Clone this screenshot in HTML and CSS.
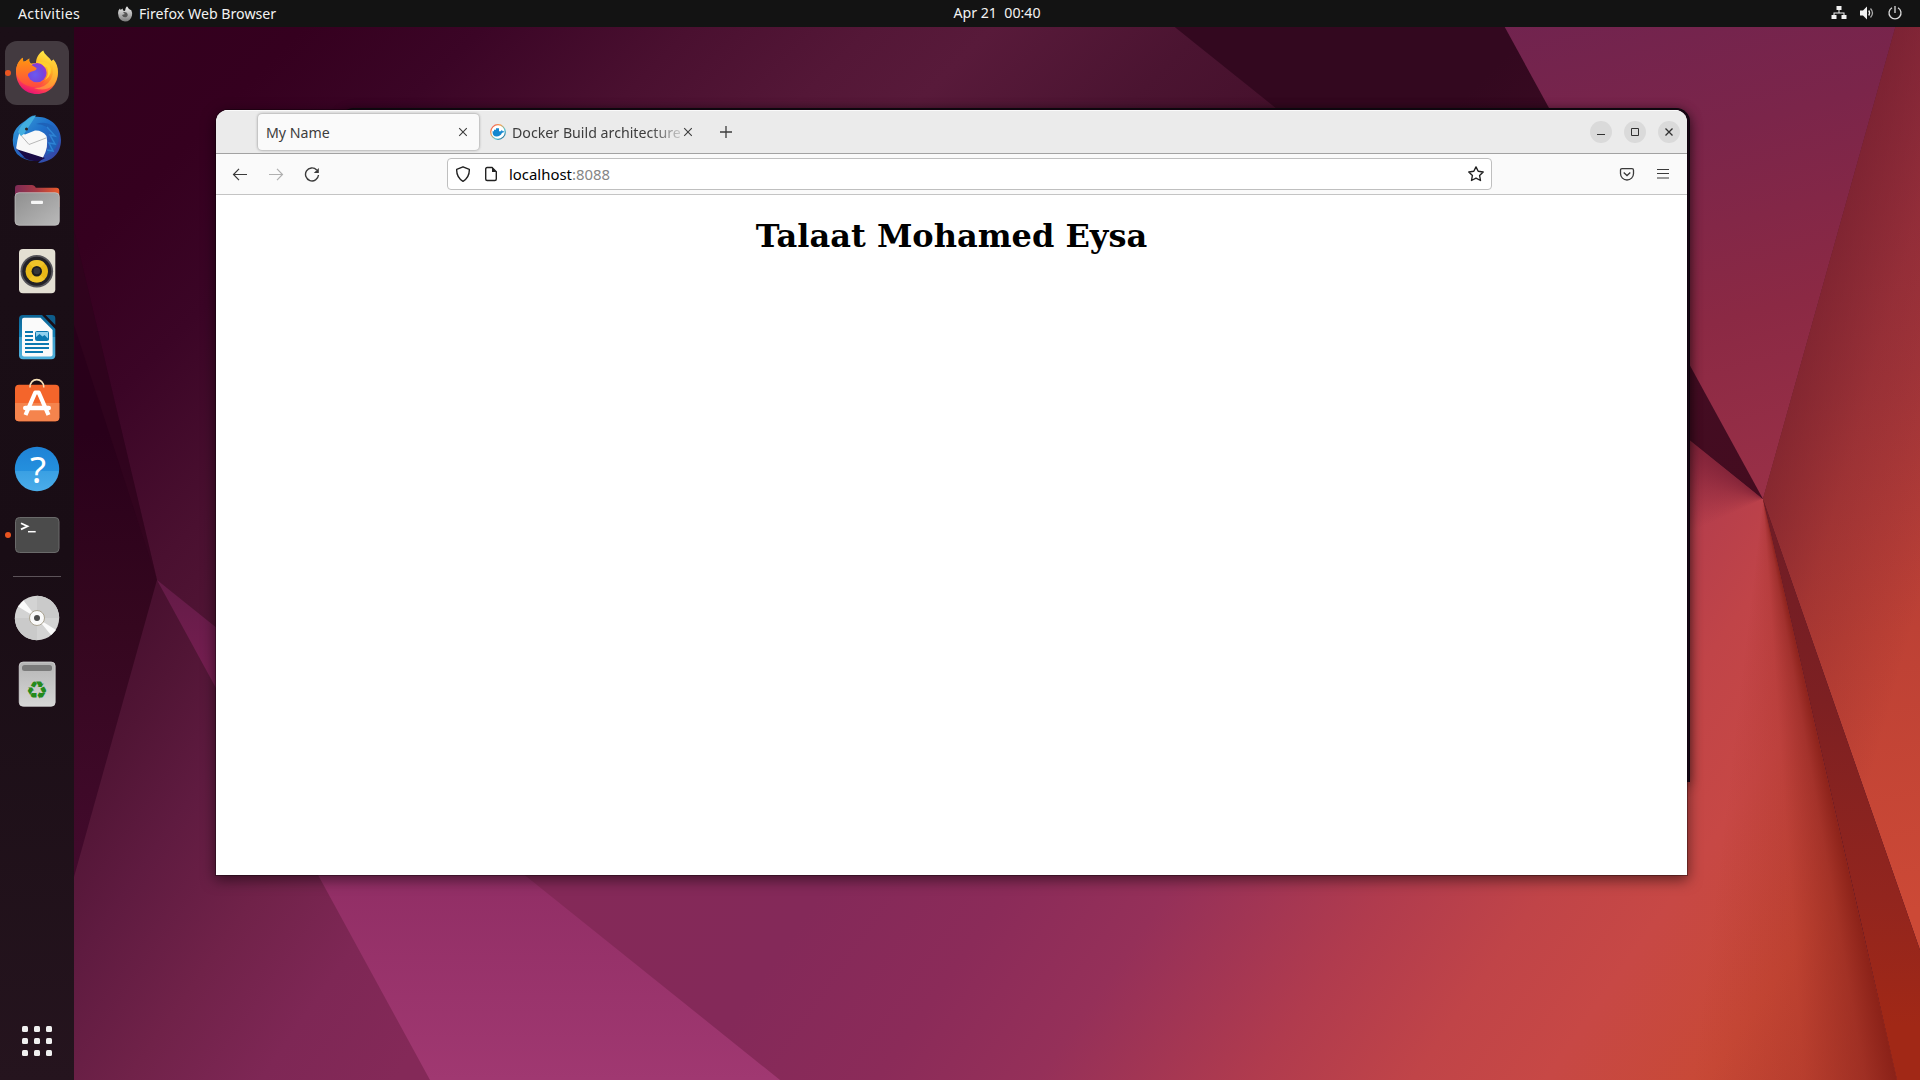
FILE: index.html
```html
<!DOCTYPE html>
<html lang="en">
<head>
<meta charset="utf-8">
<title>Desktop</title>
<link rel="stylesheet" href="styles.css">
</head>
<body>
<div class="desktop">
  <div class="wallpaper">
    <div class="facet facet-top"></div>
    <div class="facet facet-bottom"></div>
    <div class="facet facet-bottom-shade"></div>
    <div class="facet facet-left"></div>
    <div class="facet facet-left-fold"></div>
    <div class="facet facet-pink"></div>
    <div class="facet facet-dark"></div>
    <div class="facet facet-plum"></div>
    <div class="facet facet-right"></div>
    <div class="facet facet-rust"></div>
  </div>

  <header class="topbar">
    <div class="topbar-left">
      <span class="activities">Activities</span>
      <span class="app-menu">
        <svg class="app-icon" width="16" height="16" viewBox="0 0 16 16"><defs><linearGradient id="gf" x1="0" y1="0" x2="0" y2="1"><stop offset="0" stop-color="#f0f0f0"/><stop offset="1" stop-color="#7c7c7c"/></linearGradient></defs><path d="M1 7Q1 4 3 2.500L3.600 4 5.600 2.600 6 4.500 8 5Q8 2 10 .3L12 3 14.300 4.300Q15.600 7 15 9.500 13.500 15.500 8 15.500 1.500 15 1 7Z" fill="url(#gf)"/><path d="M6 6.500Q7 5.500 9.500 6.500 12 9 9.500 11 6 12 5 9L8 8Z" fill="#555"/></svg>
        <span class="app-name">Firefox Web Browser</span>
      </span>
    </div>
    <span class="clock">Apr 21&nbsp; 00:40</span>
    <div class="tray">
      <svg width="16" height="16" viewBox="0 0 16 16" fill="#f2f2f2"><path d="M5.500 1h5v4h-2v2.500h5V10h2v4h-5v-4h2V8.500h-9V10h2v4h-5v-4h2V7.500h5V5h-2z"/></svg>
      <svg width="16" height="16" viewBox="0 0 16 16"><path d="M1 5.500h3L8 1.500v13L4 10.500H1z" fill="#f2f2f2"/><path d="M9.700 5.500Q11.500 8 9.700 10.500" stroke="#f2f2f2" fill="none" stroke-width="1.300"/><path d="M11.500 3.500Q15.500 8 11.500 12.500" stroke="#aaa" fill="none" stroke-width="1.300"/></svg>
      <svg width="16" height="16" viewBox="0 0 16 16" fill="none" stroke="#dcdcdc" stroke-width="1.300"><path d="M5 2.700A6 6 0 1 0 11 2.700M8 1v7"/></svg>
    </div>
  </header>

  <nav class="dock">
    <div class="tile active running">
      <svg viewBox="0 0 64 64">
        <defs>
          <linearGradient id="ff1" x1=".75" y1="0" x2=".35" y2="1"><stop offset="0" stop-color="#fff14a"/><stop offset=".35" stop-color="#ffb927"/><stop offset=".6" stop-color="#ff7a2a"/><stop offset=".82" stop-color="#ff3d50"/><stop offset="1" stop-color="#e3107a"/></linearGradient>
          <radialGradient id="ff2" cx=".4" cy=".6" r=".7"><stop offset="0" stop-color="#6a5af0"/><stop offset=".6" stop-color="#7545dd"/><stop offset="1" stop-color="#a330cf"/></radialGradient>
          <linearGradient id="ff3" x1="0" y1="0" x2="0" y2="1"><stop offset="0" stop-color="#ff980e"/><stop offset="1" stop-color="#ff4a40"/></linearGradient>
        </defs>
        <path d="M11 31C11 25 13.500 20 17.700 16.800L18.300 20.800C20.500 20.800 21.500 19 24.300 17.500C23.700 19.500 24.500 21.500 26 22.500L31 22C31 17 34 12 38.300 9.500C39.500 14 44 15.500 46.500 20L48.500 18.500C51.500 22 53 26 53 31C53 44 44 53 32 53C20 53 11 44 11 31Z" fill="url(#ff1)"/>
        <path d="M48.500 18.500C54 27 54.500 37 48 44.500Q40 51 29 47Q41 47 46 38Q50 30 46.500 20Z" fill="#ffc53a" opacity=".5"/>
        <circle cx="32" cy="31.700" r="9.600" fill="url(#ff2)"/>
        <path d="M11 31C11 25 13.500 20 17.700 16.800L18.300 20.800Q21 20.500 24.300 17.500Q23.500 20 25.500 23.500L31.500 27Q32 29 28.500 30Q23 31 22.500 34.500Q23 40 28 42Q34 43.500 40 39Q36 47 27 46Q13 43 11 31Z" fill="url(#ff3)"/>
        <path d="M32 21.500Q37 22 39 25.500L42 26Q45 33 40 39Q49 33 44.500 23.500Q39 19 32 21.500Z" fill="#ffcf30"/>
      </svg>
    </div>
    <div class="tile">
      <svg viewBox="0 0 64 64">
        <defs><linearGradient id="tb" x1="0" y1="0" x2="1" y2="1"><stop offset="0" stop-color="#3aa5dc"/><stop offset=".45" stop-color="#1f6fc9"/><stop offset="1" stop-color="#3b3a9c"/></linearGradient></defs>
        <path d="M20 14C24 10 27 8 31 8.500L28.500 10C45 8 56 20 56 33C56 46 47 55 33 56L37 52Q23 57 12 47Q6 39 8.500 27Q11 20 17 16Z" fill="url(#tb)"/>
        <path d="M11 41L40 51Q34 56 24 53Q14 50 11 41Z" fill="#1a0b45"/>
        <path d="M14.500 25L20 27.500 30 23.500Q37 23 41.500 29Q44 40 38 50.500L11 42 12.500 33Z" fill="#f8f8f8"/>
        <path d="M14 26L24 37.500 41 31" fill="none" stroke="#b8b8b8"/>
        <path d="M13 25Q16 17 22 13Q26 9 31 8.500Q25 18 19 27L16 29Z" fill="#42aee0"/>
        <path d="M31 17Q43 17 46 27Q47 36 41 48Q55 42 54 27Q46 12 31 17Z" fill="#1e62b8"/>
        <path d="M42 20L50 29 45 28 50 37 44 36 48 44 42 43" fill="none" stroke="#2d83d4" stroke-width="1.500"/>
        <circle cx="21.500" cy="22" r="1.500" fill="#2d2520"/>
        <path d="M9 35Q9 47 20 51L11 41Z" fill="#2c62bd"/>
      </svg>
    </div>
    <div class="tile">
      <svg viewBox="0 0 64 64">
        <defs><linearGradient id="fo" x1="0" y1="0" x2="1" y2="0"><stop offset="0" stop-color="#7c2a55"/><stop offset=".5" stop-color="#a83a44"/><stop offset="1" stop-color="#e95b2c"/></linearGradient><linearGradient id="fg" x1="0" y1="0" x2="1" y2="1"><stop offset="0" stop-color="#8f8f8f"/><stop offset="1" stop-color="#b9b9b9"/></linearGradient></defs>
        <path d="M10 15q0-3 3-3h14q2 0 3 1.500l.8 1.200h20.500q3 0 3 3V34H10z" fill="url(#fo)"/>
        <rect x="10" y="19.700" width="44.300" height="32.600" rx="4" fill="url(#fg)" stroke="#c8c8c8" stroke-width=".7"/>
        <rect x="26" y="27.700" width="12" height="3.300" rx="1" fill="#f7f7f7"/>
      </svg>
    </div>
    <div class="tile">
      <svg viewBox="0 0 64 64">
        <rect x="14" y="10" width="36.300" height="44.300" rx="4" fill="#e3dfd3"/>
        <circle cx="31.800" cy="32.300" r="16.300" fill="#55545a"/>
        <circle cx="31.800" cy="32.300" r="14.500" fill="#222127"/>
        <circle cx="31.800" cy="32.300" r="11.200" fill="#e8b817"/>
        <path d="M31.800 32.300L24 24.300A11.200 11.200 0 0 1 39.700 24.300ZM31.800 32.300L24 40.300A11.200 11.200 0 0 0 39.700 40.300Z" fill="#f5cc35" opacity=".6"/>
        <circle cx="31.800" cy="32.300" r="5.200" fill="#1d1d1f"/><circle cx="31.800" cy="32" r="3.300" fill="#35353a"/>
      </svg>
    </div>
    <div class="tile">
      <svg viewBox="0 0 64 64">
        <defs><linearGradient id="wr" x1="0" y1="0" x2="0" y2="1"><stop offset="0" stop-color="#0d6494"/><stop offset=".5" stop-color="#1583b8"/><stop offset=".5" stop-color="#3a9dcb"/><stop offset="1" stop-color="#4fb0dc"/></linearGradient></defs>
        <path d="M18 10H37L50.300 24V50.300q0 4-4 4H18q-4 0-4-4V14q0-4 4-4z" fill="url(#wr)"/>
        <path d="M40.500 10H47q3.300 0 3.300 3.300V20z" fill="#0e5c8a"/>
        <path d="M19 12.700H35.500L47.600 25V49.500q0 2-2 2H19q-2 0-2-2V14.700q0-2 2-2z" fill="#fafafa"/>
        <path d="M20 27h8M20 31h8M20 35h8M20 39h24M20 43h24M20 47h18" stroke="#0a78b0" stroke-width="2"/>
        <rect x="30.500" y="26.500" width="13" height="9" rx="1" fill="#8fd0ee" stroke="#0a78b0"/><path d="M31 35v-3l3.500-3 3 2.500 2-1.500 4 4v1z" fill="#0a78b0"/>
      </svg>
    </div>
    <div class="tile">
      <svg viewBox="0 0 64 64">
        <rect x="10" y="13.700" width="44.300" height="36.600" rx="4" fill="#f4652b"/>
        <path d="M10 32H54.300V46.300q0 4-4 4H14q-4 0-4-4z" fill="#f5844d"/>
        <path d="M25 16.500C24.500 6 39 6 38.800 16.500" fill="none" stroke="#f6dfb6" stroke-width="1.600"/>
        <path d="M20.500 44L30.300 21.500H33.700L43.500 44" fill="none" stroke="#fff" stroke-width="4.200" stroke-linejoin="round"/>
        <rect x="18" y="34.800" width="28" height="4.400" rx="2.200" fill="#fff"/>
      </svg>
    </div>
    <div class="tile">
      <svg viewBox="0 0 64 64">
        <defs><linearGradient id="he" x1="0" y1="0" x2="0" y2="1"><stop offset="0" stop-color="#1f82d6"/><stop offset=".55" stop-color="#2490de"/><stop offset=".55" stop-color="#3aa0e3"/><stop offset="1" stop-color="#4badea"/></linearGradient></defs>
        <circle cx="32" cy="32" r="22.200" fill="url(#he)"/>
        <text class="help-mark" x="33" y="45.500" text-anchor="middle">?</text>
      </svg>
    </div>
    <div class="tile running">
      <svg viewBox="0 0 64 64">
        <rect x="10.500" y="14.500" width="43.500" height="35" rx="4" fill="#4b4b4b" stroke="#6a6a6a"/>
        <path d="M16 20.200L22.500 23.300 16 26.400" fill="none" stroke="#fff" stroke-width="1.800"/><path d="M23 28.700H30.700" stroke="#fff" stroke-width="1.500"/>
      </svg>
    </div>
    <div class="dock-separator"></div>
    <div class="tile">
      <svg viewBox="0 0 64 64">
        <circle cx="32" cy="32" r="22.200" fill="#d3d3d3"/>
        <path d="M32 32L32 9.800A22.200 22.200 0 0 1 54.200 32ZM32 32V54.200A22.200 22.200 0 0 1 9.800 32Z" fill="#cacaca"/>
        <path d="M32 32L13 20.500 18.500 14.500ZM32 32L51 44 46 49Z" fill="#fafafa"/>
        <circle cx="32" cy="32" r="7.500" fill="#fafafa" stroke="#aaa392"/><circle cx="32" cy="32" r="3" fill="#4d4d4d"/>
      </svg>
    </div>
    <div class="tile">
      <svg viewBox="0 0 64 64">
        <defs><linearGradient id="tr" x1="0" y1="0" x2="0" y2="1"><stop offset="0" stop-color="#b5b5b5"/><stop offset="1" stop-color="#d6d6d6"/></linearGradient></defs>
        <rect x="14.200" y="10" width="36" height="44.300" rx="4" fill="url(#tr)" stroke="#dedede" stroke-width=".7"/>
        <rect x="17" y="13" width="30" height="6" rx="2.500" fill="#7b7b7b"/>
        <text class="recycle-mark" x="32" y="46.500" text-anchor="middle">♻</text>
      </svg>
    </div>
    <div class="app-grid"><i></i><i></i><i></i><i></i><i></i><i></i><i></i><i></i><i></i></div>
  </nav>

  <div class="back-window"></div>
  <main class="window">
    <div class="tabbar">
      <div class="tab selected"><span class="tab-title">My Name</span>
        <svg width="16" height="16" viewBox="0 0 16 16" stroke="#3d3d3d" stroke-width="1.100"><path d="M4.200 4.200l7.600 7.600M11.800 4.200l-7.600 7.600"/></svg></div>
      <div class="tab">
        <svg class="favicon" width="16" height="16" viewBox="0 0 16 16"><defs><linearGradient id="dk" x1="0" y1="0" x2="1" y2="1"><stop offset="0" stop-color="#f0485a"/><stop offset=".35" stop-color="#f5a04a"/><stop offset=".65" stop-color="#4fc7d8"/><stop offset="1" stop-color="#184a7a"/></linearGradient></defs><circle cx="8" cy="8" r="7.300" fill="#fff" stroke="url(#dk)" stroke-width="1.200"/><path d="M2.500 7.300H4V5.800h2V4.300h3v3h2.200L11.600 5.700 12.800 7.200H14.500Q13.500 8.700 12 8.700 10.500 12.500 6.500 12.500 2.500 12.500 2.500 7.300Z" fill="#1488cf"/></svg>
        <span class="tab-title fade">Docker Build architecture</span>
        <svg width="16" height="16" viewBox="0 0 16 16" stroke="#3d3d3d" stroke-width="1.100"><path d="M4.200 4.200l7.600 7.600M11.800 4.200l-7.600 7.600"/></svg></div>
      <svg class="new-tab" width="16" height="16" viewBox="0 0 16 16" stroke="#3d3d3d" stroke-width="1.300"><path d="M8 2v12M2 8h12"/></svg>
      <div class="window-buttons">
        <span><svg width="16" height="16" viewBox="0 0 16 16"><path d="M4 10.500h8" stroke="#303030"/></svg></span>
        <span><svg width="16" height="16" viewBox="0 0 16 16"><path d="M4.500 4.500h7v7h-7z" stroke="#303030" fill="none"/></svg></span>
        <span><svg width="16" height="16" viewBox="0 0 16 16"><path d="M4.500 4.500l7 7M11.500 4.500l-7 7" stroke="#303030" stroke-width="1.300"/></svg></span>
      </div>
    </div>
    <div class="toolbar">
      <div class="nav-buttons">
        <svg width="16" height="16" viewBox="0 0 16 16" fill="none" stroke="#3b3b3b" stroke-width="1.200"><path d="M15 8.500H1.500M7 2.800L1.500 8.500 7 14.200"/></svg>
        <svg width="16" height="16" viewBox="0 0 16 16" fill="none" stroke="#b0b0b0" stroke-width="1.200"><path d="M1 8.500h13.500M9 2.800L14.500 8.500 9 14.200"/></svg>
        <svg width="16" height="16" viewBox="0 0 16 16" fill="none" stroke="#3b3b3b" stroke-width="1.400"><path d="M12.700 3.900A6.500 6.500 0 1 0 14.500 9"/><path d="M14.800 2v5h-5z" fill="#3b3b3b" stroke="none"/></svg>
      </div>
      <div class="urlbar">
        <svg width="16" height="16" viewBox="0 0 16 16" fill="none" stroke="#222" stroke-width="1.400"><path d="M8 .8L14.300 3.300Q14.700 11 8 15.300 1.300 11 1.700 3.300Z" stroke-linejoin="round"/></svg>
        <svg width="16" height="16" viewBox="0 0 16 16" fill="none" stroke="#222" stroke-width="1.400"><path d="M4.200 1.500H9L13.300 5.800V13q0 1.500-1.500 1.500H4.200q-1.500 0-1.500-1.500V3q0-1.500 1.500-1.500z"/><path d="M9 1.200l4.500 4.800H9z" fill="#222" stroke="none"/></svg>
        <span class="url">localhost<span class="port">:8088</span></span>
        <svg width="16" height="16" viewBox="0 0 16 16" fill="none" stroke="#222" stroke-width="1.400" stroke-linejoin="round"><path d="M8 .9L10.200 5.300 15.200 6 11.600 9.500 12.500 14.500 8 12.200 3.500 14.500 4.400 9.500.8 6 5.800 5.300Z"/></svg>
      </div>
      <div class="tool-buttons">
        <svg width="16" height="16" viewBox="0 0 16 16" fill="none" stroke="#3b3b3b" stroke-width="1.300"><path d="M3 2.700h10q1.500 0 1.500 1.500V7.500A6.500 6.500 0 0 1 1.500 7.500V4.200q0-1.500 1.500-1.500z"/><path d="M4.700 6.500L8 9.500 11.300 6.500"/></svg>
        <svg width="16" height="16" viewBox="0 0 16 16" stroke="#3b3b3b" stroke-width="1.200"><path d="M2 3.500h12M2 7.500h12M2 12h12"/></svg>
      </div>
    </div>
    <section class="page"><h1>Talaat Mohamed Eysa</h1></section>
  </main>
</div>
</body>
</html>
```
FILE: styles.css
```css
* { box-sizing: border-box; }
body { margin: 0; overflow: hidden; font-family: "Noto Sans", sans-serif; font-size: 14.2px; }
svg { display: block; flex: none; }
.desktop { position: relative; width: 1920px; height: 1080px; overflow: hidden; background: #33001f; }

/* Wallpaper: folded paper facets that meet at (157,580) and (1763,499) */
.wallpaper, .facet { position: absolute; inset: 0; }
.facet-top { background: linear-gradient(135deg, #32001d 3%, #35001f 11%, #3b0526 17%, #4a1030 24%, #541737 30%, #581a3a 34%, #4b1431 41%, #3d0b24 55%); }
.facet-bottom {
  clip-path: polygon(0 877px, 74px 877px, 157px 580px, 300px 695px, 900px 300px, 1690px 440px, 1763px 499px, 1897px 1080px, 0 1080px);
  background: linear-gradient(125deg, #450e2d 20%, #511535 24%, #5f1b40 28%, #702249 33%, #7e2755 38%, #842958 43%, #842959 54%, #8b2b59 61%, #953059 67%, #b03b4e 75%, #c04448 81%, #c74845 86%, #c84936 92%, #b83f2d 100%);
}
.facet-bottom-shade {
  clip-path: polygon(1500px 290px, 1690px 440px, 1763px 499px, 1897px 1080px, 1400px 1080px);
  background: conic-gradient(from 0deg at 1763px 499px, rgba(130,28,20,.85) 167deg, rgba(135,32,25,.55) 170deg, rgba(150,38,30,.22) 176deg, rgba(160,40,40,0) 187deg, rgba(110,20,50,0) 245deg, rgba(100,20,45,.3) 280deg, rgba(100,20,45,.6) 308deg);
}
.facet-left { clip-path: polygon(0 0, 74px 230px, 157px 580px, 74px 877px, 0 1080px); background: linear-gradient(180deg, #2a001a 20%, #29001a 40%, #35071f 58%, #420a2c 80%); }
.facet-left-fold { clip-path: polygon(74px 230px, 157px 580px, 74px 325px); background: rgba(58,8,36,.4); }
.facet-pink { clip-path: polygon(157px 580px, 780px 1080px, 430px 1080px); background: linear-gradient(180deg, #641b47 54%, #741e50 62%, #912e65 81%, #a03871 100%); }
.facet-dark { clip-path: polygon(1141px 0, 1490px 0, 1763px 499px); background: linear-gradient(135deg, #33081f 52%, #420d26 63%, #450b1c 80%, #56101b 88%); }
.facet-plum { clip-path: polygon(1490px 0, 1903px 0, 1763px 499px); background: linear-gradient(165deg, #6e2350 24%, #7b254a 37%, #8b2944 49%, #9d3248 64%); }
.facet-right {
  clip-path: polygon(1903px 0, 1920px 0, 1920px 950px, 1763px 499px);
  background: linear-gradient(105.6deg, rgba(100,24,40,.55) 85.6%, rgba(100,24,40,.25) 89%, rgba(100,24,40,0) 94%), linear-gradient(170deg, #892849 4%, #9a3041 28%, #a9383b 50%, #bd4135 68%, #cc4936 88%);
}
.facet-rust { clip-path: polygon(1763px 499px, 1920px 950px, 1920px 1080px, 1897px 1080px, 1860px 918px); background: linear-gradient(180deg, #6e1c26 46%, #7d2022 65%, #92251e 83%, #a12816 95%); }

.topbar { position: relative; z-index: 3; height: 27px; padding: 0 17px 0 18px; display: grid; grid-template-columns: 1fr auto 1fr; align-items: center; background: #131313; color: #f2f2f2; }
.topbar-left { display: flex; align-items: center; }
.activities { width: 99px; letter-spacing: .3px; }
.app-menu { display: flex; align-items: center; gap: 6px; }
.app-name { white-space: nowrap; }
.clock { transform: translate(36.500px, -1px); }
.tray { display: flex; justify-content: flex-end; gap: 12px; transform: translateY(-1px); }

.dock { position: relative; z-index: 2; width: 74px; height: 1053px; padding: 14px 5px 0; display: flex; flex-direction: column; gap: 2px; background: linear-gradient(180deg, #1b0f17, #190d15 50%, #25141e); }
.tile { position: relative; width: 64px; height: 64px; flex: none; border-radius: 12px; }
.tile svg { width: 64px; height: 64px; }
.tile.active { background: #433a40; }
.tile.running::before { content: ""; position: absolute; left: 0; top: 29px; width: 6px; height: 6px; border-radius: 50%; background: #e95420; }
.dock-separator { flex: none; width: 48px; height: 1px; margin: 7px 8px; background: #5c5359; }
.help-mark { font: 37px "Noto Sans", sans-serif; fill: #fff; }
.recycle-mark { font: 25px "DejaVu Sans", sans-serif; fill: #248a1c; }
.app-grid { margin: auto auto 24px; display: grid; grid-template-columns: repeat(3, 6px); gap: 6px; }
.app-grid i { height: 6px; border-radius: 1.5px; background: #f0f0f0; }

.back-window { position: absolute; left: 340px; top: 108px; width: 1350px; height: 674px; border-radius: 14px 14px 0 0; background: #21071c; border-top: 1px solid #0f0a10; border-right: 1px solid #120712; box-shadow: 0 3px 12px rgba(0,0,0,.45); }
.window { position: absolute; left: 216px; top: 110px; width: 1471px; height: 765px; display: flex; flex-direction: column; border-radius: 12px 12px 0 0; overflow: hidden; background: #fff; box-shadow: 0 0 0 1px rgba(0,0,0,.3), 0 4px 14px 1px rgba(0,0,0,.5); }
.tabbar { height: 44px; flex: none; padding: 4px 7px 3px 42px; display: flex; background: #ebebeb; border-bottom: 1px solid #a2a2a2; box-shadow: inset 0 1px #fafafa; }
.tab { display: flex; align-items: center; width: 223px; height: 36px; padding: 0 8px; color: #3d3d3d; }
.tab.selected { width: 221px; background: #fafafa; border-radius: 4px; box-shadow: 0 0 3px rgba(0,0,0,.45); }
.tab-title { flex: 1; white-space: nowrap; overflow: hidden; }
.tab:not(.selected) { padding: 0 0 0 11px; width: 217px; }
.favicon { margin-right: 6px; }
.fade { flex: none; width: 168px; -webkit-mask-image: linear-gradient(90deg, #000 82%, rgba(0,0,0,.2)); mask-image: linear-gradient(90deg, #000 82%, rgba(0,0,0,.2)); }
.new-tab { margin: 10px 0 0 22px; }
.window-buttons { margin-left: auto; display: flex; gap: 12px; padding-top: 7px; }
.window-buttons span { width: 22px; height: 22px; border-radius: 50%; background: #dadada; display: grid; place-items: center; }
.toolbar { height: 41px; flex: none; padding: 0 16px; display: flex; align-items: center; background: #fafafa; border-bottom: 1px solid #c4c4c4; }
.nav-buttons { width: 215px; display: flex; gap: 20px; }
.urlbar { width: 1045px; height: 32px; display: flex; align-items: center; padding: 0 7px; gap: 12px; background: #fff; border: 1px solid #bfbfbf; border-radius: 4px; }
.url { flex: 1; margin-left: -2px; font-size: 14.9px; color: #000; }
.port { color: #858585; }
.tool-buttons { margin-left: auto; display: flex; gap: 20px; }
.page { flex: 1; }
.page h1 { margin: 22.4px 8px; text-align: center; font: bold 32px "DejaVu Serif", serif; color: #000; }
```
